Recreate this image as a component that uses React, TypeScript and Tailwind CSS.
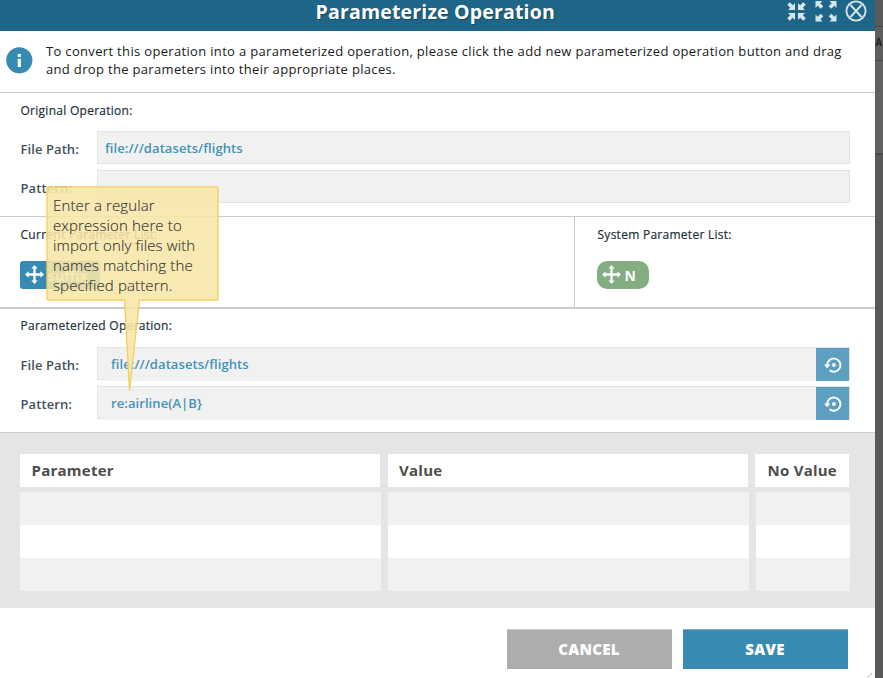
import type { ReactNode } from "react";

function MoveIcon() {
  return (
    <svg width="19" height="19" viewBox="0 0 18 18" className="mb-[2px] shrink-0" fill="#fff">
      <path d="M9 0l3 3.4h-1.9v4.5h4.5V6L18 9l-3.4 3v-1.9h-4.5v4.5H12L9 18l-3-3.4h1.9v-4.5H3.4V12L0 9l3.4-3v1.9h4.5V3.4H6z" />
    </svg>
  );
}

function ResetIcon() {
  return (
    <svg width="18" height="16" viewBox="0 0 18 16" fill="none">
      <path d="M3.2 8.6A6.6 6.6 0 1 1 5.6 13.2" stroke="#fff" strokeWidth="1.9" />
      <path d="M0 7.4h6.4L3.2 11.2z" fill="#fff" />
      <circle cx="9.9" cy="8" r="1.9" fill="#fff" />
    </svg>
  );
}

function ArrowHead({ t }: { t: string }) {
  return <path transform={t} d="M0 0h7L4.8 2.2 7.8 5.2 5.2 7.8 2.2 4.8 0 7z" />;
}

function ShrinkIcon() {
  return (
    <svg width="19" height="19" viewBox="0 0 19 19" fill="#d6e5ec">
      <ArrowHead t="translate(8 8) rotate(180)" />
      <ArrowHead t="translate(11 8) rotate(270)" />
      <ArrowHead t="translate(8 11) rotate(90)" />
      <ArrowHead t="translate(11 11)" />
    </svg>
  );
}

function GrowIcon() {
  return (
    <svg width="22" height="22" viewBox="0 0 22 22" fill="#d6e5ec">
      <ArrowHead t="translate(0.5 1)" />
      <ArrowHead t="translate(21.5 1) rotate(90)" />
      <ArrowHead t="translate(0.5 21.5) rotate(270)" />
      <ArrowHead t="translate(21.5 21.5) rotate(180)" />
    </svg>
  );
}

function CloseIcon() {
  return (
    <svg width="22" height="22" viewBox="0 0 22 22" fill="none" stroke="#d6e5ec" strokeWidth="1.9">
      <circle cx="11" cy="11" r="9.6" />
      <path d="M5.5 5l11 12M16.5 5l-11 12" />
    </svg>
  );
}

function Heading({ children }: { children: ReactNode }) {
  return (
    <h2 className="pl-[0.5px] text-[12px] leading-[18px] font-normal tracking-[0.27px] whitespace-nowrap text-[#23323d] [-webkit-text-stroke:0.2px_#23323d]">
      {children}
    </h2>
  );
}

function Field({ label, value, editable = false }: { label: string; value?: string; editable?: boolean }) {
  return (
    <div className="flex h-[33px] w-[830px]">
      <div className="w-[77px] pt-[9px] pl-[0.5px] text-[13px] leading-[18px] font-semibold tracking-[0.08px] text-[#43515b]">
        {label}
      </div>
      <div className="flex flex-1 border border-[#e3e3e3] bg-[#f1f1f1]">
        <div
          className={`ml-[7px] flex-1 bg-[#f1f1f1] pt-[7px] text-[13px] leading-[18px] font-semibold tracking-[0.08px] text-[#4392b8] ${editable ? "h-[33px] pl-[6px]" : ""}`}
        >
          {value}
        </div>
        {editable && (
          <button className="flex h-[33px] w-[33px] items-center justify-center bg-[#5c9fc0]">
            <ResetIcon />
          </button>
        )}
      </div>
    </div>
  );
}

const rows = ["bg-[#f1f1f1]", "bg-white", "bg-[#f1f1f1]"];

export default function App() {
  return (
    <div className="relative flex h-[678px] w-[883px] overflow-hidden bg-[#58595b] font-['Open_Sans','Noto_Sans',sans-serif]">
      <main className="flex w-[875px] shrink-0 flex-col bg-white">
        <header className="flex h-[31px] shrink-0 bg-[#1e6687]">
          <h1 className="ml-[315.5px] w-[470.5px] text-[19.5px] leading-[24px] font-bold tracking-[0.18px] whitespace-nowrap text-white [text-shadow:1px_1px_1px_#164b64]">
            Parameterize Operation
          </h1>
          <div className="flex items-start">
            <div className="w-[28.5px] pt-[2px] pl-[0.5px]"><ShrinkIcon /></div>
            <div className="w-[30px]"><GrowIcon /></div>
            <CloseIcon />
          </div>
        </header>

        <section className="flex h-[62px] shrink-0 border-b border-[#cbcbcb]">
          <svg className="mt-[16px] ml-[6px] shrink-0" width="27" height="27" viewBox="0 0 27 27">
            <circle cx="13.3" cy="13.3" r="13.1" fill="#378bb3" />
            <path d="M11.7 7h3.2v3h-3.2zM11.7 11.7h3.2v8.3h-3.2z" fill="#fff" />
          </svg>
          <p className="mt-[11px] ml-[13px] text-[13px] leading-[18px] tracking-[0.33px] whitespace-nowrap text-[#202020]">
            To convert this operation into a parameterized operation, please click the add new parameterized operation button and drag
            <br />
            and drop the parameters into their appropriate places.
          </p>
        </section>

        <section className="flex h-[124px] shrink-0 flex-col border-b border-[#cbcbcb] pt-[9px] pl-[20px]">
          <Heading>Original Operation:</Heading>
          <div className="mt-[11px] flex flex-col gap-[6px]">
            <Field label="File Path:" value="file:///datasets/flights" />
            <Field label="Pattern:" />
          </div>
        </section>

        <section className="flex h-[92px] shrink-0 border-b-2 border-[#cbcbcb]">
          <div className="w-[575px] border-r border-[#cbcbcb] pt-[9px] pl-[20px]">
            <Heading>Current Parameter List:</Heading>
            <div className="mt-[17px] flex h-[28px] w-[80px] items-center rounded-[3px] bg-[#378bb3] pl-[5px] text-[14px] font-bold text-white">
              <MoveIcon />
              <span className="ml-[4px]">suffix</span>
            </div>
          </div>
          <div className="pt-[9px] pl-[22px]">
            <Heading>System Parameter List:</Heading>
            <div className="mt-[17px] flex h-[28px] w-[52px] items-center rounded-[10px] bg-[#82ae82] pl-[4.5px] text-[14px] font-bold text-white">
              <MoveIcon />
              <span className="ml-[4px]">N</span>
            </div>
          </div>
        </section>

        <section className="flex h-[124px] shrink-0 flex-col border-b border-[#cbcbcb] pt-[8px] pl-[20px]">
          <Heading>Parameterized Operation:</Heading>
          <div className="mt-[12px] flex flex-col gap-[6px]">
            <Field label="File Path:" value="file:///datasets/flights" editable />
            <Field label="Pattern:" value="re:airline(A|B}" editable />
          </div>
        </section>

        <section className="h-[175px] shrink-0 bg-[#e5e5e5] pt-[21px] pl-[20px]">
          <div className="grid grid-cols-[360px_360px_94px] text-[15px] leading-[33px] font-bold tracking-[0.25px] text-[#4d4d4d]">
            <div className="bg-white pl-[11.5px]">Parameter</div>
            <div className="ml-[8px] w-[360px] bg-white pl-[11px]">Value</div>
            <div className="ml-[15px] w-[94px] bg-white pl-[12.5px] whitespace-nowrap">No Value</div>
          </div>
          <div className="mt-[5px]">
            {rows.map((color, i) => (
              <div key={i} className="flex h-[33px] gap-[7px]">
                <div className={`w-[361px] ${color}`} />
                <div className={`w-[361px] ${color}`} />
                <div className={`w-[94px] ${color}`} />
              </div>
            ))}
          </div>
        </section>

        <footer className="flex flex-1 gap-[11px] pt-[21px] pl-[507px] text-[15px] font-extrabold tracking-[0.3px] text-white">
          <button className="h-[40px] w-[165px] shrink-0 border-t border-[#c6c6c6] bg-[#adadad] pr-[1px]">CANCEL</button>
          <button className="h-[40px] w-[165px] shrink-0 border-t border-[#76afc9] bg-[#378bb3] pr-[1px]">SAVE</button>
          <svg className="mt-[43px] ml-[8px] shrink-0" width="6" height="6" viewBox="0 0 6 6">
            <path d="M0.5 5.5l5-5" stroke="#999" strokeDasharray="1.5 1" />
          </svg>
        </footer>
      </main>

      <aside className="w-[8px] shrink-0 overflow-hidden">
        <div className="h-[27px] border-b border-[#484848] bg-[#5c5b5a]" />
        <div className="h-[34px] border-b border-[#484848] bg-[#5f5e5d] text-[10px] leading-[31px] font-bold text-[#222]">
          <span className="-ml-[5px]">cA</span>
        </div>
        <div className="h-[94px] border-b-2 border-[#4b4b4b] bg-[#636260]" />
      </aside>

      <div className="absolute top-[186px] left-[46px] h-[206px] w-[173px]">
        <svg className="absolute inset-0" width="173" height="206" viewBox="0 0 173 206">
          <path
            d="M2 .8H171Q172 .8 172 2V113Q172 114 171 114H93.5L83.5 205 78.5 114H2Q1 114 1 113V2Q1 .8 2 .8Z"
            fill="#f7e5a8"
            fillOpacity="0.89"
            stroke="#f3cf5b"
            strokeWidth="1.3"
          />
        </svg>
        <p className="relative pt-[9px] pl-[7px] text-[15px] leading-[20px] font-light tracking-[0.13px] whitespace-nowrap text-[#333] [-webkit-text-stroke:0.15px_#444]">
          Enter a regular<br />expression here to<br />import only files with<br />names matching the<br />specified pattern.
        </p>
      </div>
    </div>
  );
}
